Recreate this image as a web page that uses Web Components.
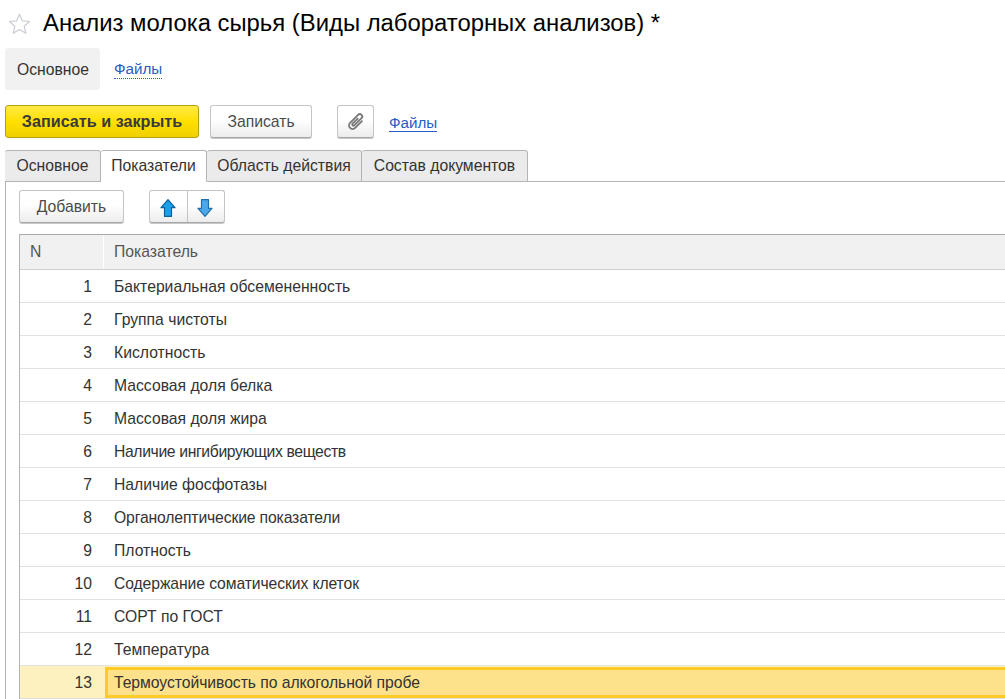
<!DOCTYPE html>
<html lang="ru">
<head>
<meta charset="utf-8">
<title>Анализ молока сырья</title>
<style>
  html, body { margin: 0; height: 100%; overflow: hidden; background: #fff; }
  body { font: 15.72px "Liberation Sans", Arial, sans-serif; color: #333; }
</style>
</head>
<body>
<form-page></form-page>
<script>
class FormTitle extends HTMLElement {
  connectedCallback() {
    this.attachShadow({ mode: 'open' });
    this.shadowRoot.innerHTML = `
      <style>
        :host { display: flex; align-items: center; height: 48px; padding: 0 0 2px 8px; box-sizing: border-box; }
        svg { width: 23px; height: 21px; margin-right: 12px; flex: none; }
        h1 { margin: 0; font: 400 23.85px "Liberation Sans", Arial, sans-serif; color: #000; white-space: nowrap; }
      </style>
      <svg viewBox="0 0 23 21"><path d="M11.5 1.2l2.9 6.6 7.2.7-5.4 4.8 1.6 7-6.3-3.7-6.3 3.7 1.6-7L1.4 8.5l7.2-.7z" fill="#fff" stroke="#c9cdd2" stroke-width="1.2" stroke-linejoin="round"/></svg>
      <h1><slot></slot></h1>`;
  }
}
class FormNav extends HTMLElement {
  connectedCallback() {
    this.attachShadow({ mode: 'open' });
    this.shadowRoot.innerHTML = `
      <style>
        :host { display: flex; align-items: center; height: 42px; margin-left: 5px; }
        .cur { height: 42px; width: 95px; padding: 2px 0 0 1px; box-sizing: border-box; display: flex; align-items: center; justify-content: center; background: #f1f1f1; border-radius: 3px; color: #333; }
        a { margin: 0 0 0 14px; color: #2a5bc5; font-size: 15.2px; text-decoration: none; border-bottom: 1px dotted #2a5bc5; line-height: 18px; }
      </style>
      <div class="cur">Основное</div><a href="#">Файлы</a>`;
  }
}
class UiButton extends HTMLElement {
  connectedCallback() {
    this.attachShadow({ mode: 'open' });
    this.shadowRoot.innerHTML = `
      <style>
        :host { display: inline-flex; align-items: center; justify-content: center; box-sizing: border-box; height: 33px;
          border: 1px solid #c4c4c4; border-bottom-color: #a8a8a8; border-radius: 3px; color: #4b4b4b;
          background: linear-gradient(#fff 45%, #ececec); box-shadow: 0 1px 0 #c8c8c8; flex: none; }
        :host([primary]) { border-color: #b5a10a; background: linear-gradient(#ffea45, #ffe000 50%, #f0d000); color: #3a3a3a; font-weight: 700; font-size: 16.2px; box-shadow: none; }
      </style>
      <slot></slot>`;
  }
}
class FormToolbar extends HTMLElement {
  connectedCallback() {
    this.attachShadow({ mode: 'open' });
    this.shadowRoot.innerHTML = `
      <style>
        :host { display: flex; align-items: center; margin: 15px 0 0 5px; height: 33px; }
        ui-button { margin-right: 25px; }
        a { color: #2a5bc5; font-size: 15.2px; text-decoration: none; border-bottom: 1px solid #2a5bc5; line-height: 17px; margin-top: 2px; }
        svg { width: 24px; height: 24px; }
      </style>
      <ui-button primary style="width:194px;margin-right:11px">Записать и закрыть</ui-button>
      <ui-button style="width:102px">Записать</ui-button>
      <ui-button style="width:37px;margin-right:15px">
        <svg viewBox="0 0 20 20" fill="none" stroke="#777" stroke-width="1.5" stroke-linecap="round"><path transform="rotate(45 10 10)" d="M13 6V14a3 3 0 0 1-6 0V4.5a2 2 0 0 1 4 0V13a1 1 0 0 1-2 0V7"/></svg>
      </ui-button>
      <a href="#">Файлы</a>`;
  }
}
class TabStrip extends HTMLElement {
  connectedCallback() {
    this.attachShadow({ mode: 'open' });
    const tabs = (this.getAttribute('tabs') || '').split('|');
    const active = +this.getAttribute('active');
    const widths = [96, 106, 155, 166];
    this.shadowRoot.innerHTML = `
      <style>
        :host { display: flex; height: 32px; margin: 12px 0 0 5px; box-sizing: border-box; border-bottom: 1px solid #b4b4b4; }
        div { box-sizing: border-box; height: 32px; display: flex; align-items: center; justify-content: center; white-space: nowrap;
          background: #ebebeb; border: 1px solid #b4b4b4; border-left: 0; border-radius: 3px 3px 0 0; color: #333; }
        div:first-child { border-left: 1px solid #b4b4b4; }
        div.on { background: #fff; border-bottom-color: #fff; }
      </style>
      ${tabs.map((t, i) => `<div class="${i === active ? 'on' : ''}" style="width:${widths[i]}px">${t}</div>`).join('')}`;
  }
}
class MoveButtons extends HTMLElement {
  connectedCallback() {
    this.attachShadow({ mode: 'open' });
    const up = 'M9 .7L16 8.7H12.5V17.3H5.5V8.7H2Z';
    const down = 'M5.5 .7H12.5V9.3H16L9 17.3L2 9.3H5.5Z';
    this.shadowRoot.innerHTML = `
      <style>
        :host { display: inline-flex; box-sizing: border-box; width: 76px; height: 33px; margin-left: 25px;
          border: 1px solid #c4c4c4; border-bottom-color: #a8a8a8; border-radius: 3px;
          background: linear-gradient(#fff 45%, #ececec); box-shadow: 0 1px 0 #c8c8c8; }
        span { flex: 1; display: flex; align-items: center; justify-content: center; }
        span + span { border-left: 1px solid #c4c4c4; }
        svg { width: 18px; height: 18px; margin-top: 2px; }
        span + span svg { margin-left: -1px; }
      </style>
      <span><svg viewBox="0 0 18 18"><path d="${up}" fill="#1a9fe8" stroke="#0d5f9e" stroke-width="1.2" stroke-linejoin="round"/></svg></span>
      <span><svg viewBox="0 0 18 18"><path d="${down}" fill="#4aa8e8" stroke="#1f6fae" stroke-width="1.2" stroke-linejoin="round"/></svg></span>`;
  }
}
class DataRow extends HTMLElement {
  connectedCallback() {
    this.attachShadow({ mode: 'open' });
    const track = this.getAttribute('track') || '0';
    this.shadowRoot.innerHTML = `
      <style>
        :host { display: grid; grid-template-columns: 84px 1fr; height: 33px; box-sizing: border-box; border-bottom: 1px solid #e2e2e2; color: #333; }
        .n { text-align: right; padding-right: 12px; line-height: 34px; }
        .t { padding-left: 10px; line-height: 34px; white-space: nowrap; letter-spacing: ${track}px; }
        :host([selected]) { background: #fdf1c0; border-bottom-color: #dcdcdc; }
        :host([selected]) .t { margin-left: 1px; padding-left: 6px; height: 31px; margin-top: 1px; box-sizing: border-box; background: #fde28b; border: 3px solid #fdca28; border-right: 0; line-height: 25px; }
      </style>
      <div class="n">${this.getAttribute('n')}</div><div class="t"><slot></slot></div>`;
  }
}
class DataTable extends HTMLElement {
  connectedCallback() {
    this.attachShadow({ mode: 'open' });
    this.shadowRoot.innerHTML = `
      <style>
        :host { display: block; margin: 11px 0 0 13px; border-left: 1px solid #b4b4b4; border-top: 1px solid #a8a8a8; }
        .head { display: grid; grid-template-columns: 84px 1fr; height: 35px; box-sizing: border-box; background: #f1f1f1; border-bottom: 1px solid #cfcfcf; color: #555; line-height: 33px; }
        .head div { padding-left: 10px; }
        .head div:first-child { border-right: 1px solid #fff; }
      </style>
      <div class="head"><div>N</div><div>Показатель</div></div>
      <slot></slot>`;
  }
}
class FormPage extends HTMLElement {
  connectedCallback() {
    this.attachShadow({ mode: 'open' });
    const rows = [['Бактериальная обсемененность'], ['Группа чистоты'], ['Кислотность'], ['Массовая доля белка'], ['Массовая доля жира'],
      ['Наличие ингибирующих веществ', -0.36], ['Наличие фосфотазы'], ['Органолептические показатели', -0.14], ['Плотность'],
      ['Содержание соматических клеток', -0.1], ['СОРТ по ГОСТ'], ['Температура'], ['Термоустойчивость по алкогольной пробе', -0.05]];
    this.shadowRoot.innerHTML = `
      <style>
        :host { display: flex; flex-direction: column; height: 699px; overflow: hidden; }
        .panel { flex: 1; min-height: 0; margin-left: 5px; border-left: 1px solid #b4b4b4; padding-top: 8px; box-sizing: border-box; overflow: hidden; }
        .tools { display: flex; margin-left: 13px; }
        .add { width: 105px; }
      </style>
      <form-title>Анализ молока сырья (Виды лабораторных анализов) *</form-title>
      <form-nav></form-nav>
      <form-toolbar></form-toolbar>
      <tab-strip tabs="Основное|Показатели|Область действия|Состав документов" active="1"></tab-strip>
      <div class="panel">
        <div class="tools"><ui-button class="add">Добавить</ui-button><move-buttons></move-buttons></div>
        <data-table>
          ${rows.map(([r, t], i) => `<data-row n="${i + 1}"${t ? ` track="${t}"` : ''}${i === 12 ? ' selected' : ''}>${r}</data-row>`).join('')}
        </data-table>
      </div>`;
  }
}
customElements.define('form-title', FormTitle);
customElements.define('form-nav', FormNav);
customElements.define('ui-button', UiButton);
customElements.define('form-toolbar', FormToolbar);
customElements.define('tab-strip', TabStrip);
customElements.define('move-buttons', MoveButtons);
customElements.define('data-row', DataRow);
customElements.define('data-table', DataTable);
customElements.define('form-page', FormPage);
</script>
</body>
</html>
